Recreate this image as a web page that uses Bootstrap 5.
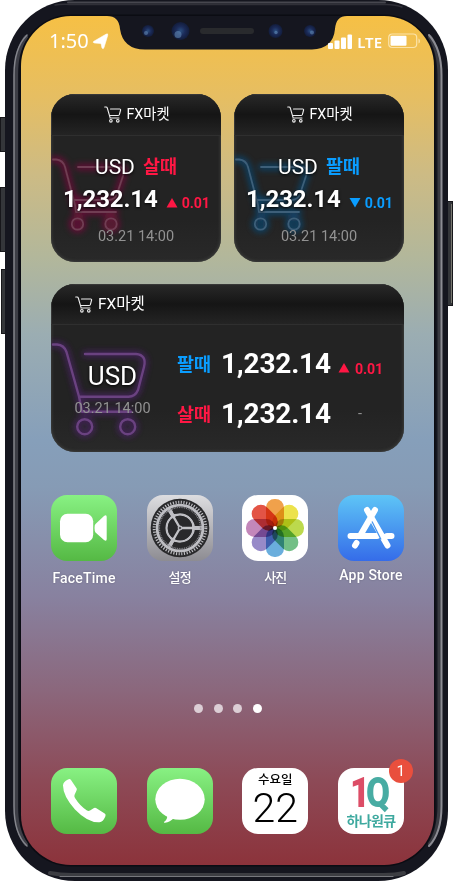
<!DOCTYPE html>
<html lang="ko">
<head>
<meta charset="utf-8">
<meta name="viewport" content="width=device-width, initial-scale=1">
<title>FX마켓 위젯</title>
<link href="https://cdn.jsdelivr.net/npm/bootstrap@5.3.0/dist/css/bootstrap.min.css" rel="stylesheet">
<style>
body{background:#fff;font-family:Roboto,"Noto Sans CJK KR",sans-serif;color:#fff;overflow:hidden}
svg{display:block;flex:none}
.phone{width:453px;height:881px;padding:16px 19px 16px 21px}
.shell{left:0;top:0;z-index:0}
.display-area{z-index:1;height:849px;border-radius:50px;padding:0 30px;overflow:hidden;
 background:linear-gradient(#f6c045 0,#e6be62 9.5%,#cdbb84 18.5%,#b2b79b 28.5%,#9badb2 37.5%,#869fba 50%,#869bb5 55.5%,#88819f 68.5%,#8b677c 79.5%,#8d4a57 90%,#8c333b 100%)}
.notch{left:84px;top:0}
.status{height:78px;margin:0 -17px 0 -2px;padding-top:13px;font-family:"Noto Sans",sans-serif}
.clock{font-size:20px;line-height:24px}
.locate{margin-left:3px}
.net{font-size:15px;line-height:26px;font-weight:600;margin:0 6px 0 4px}
.widget{border-radius:24px;background:linear-gradient(#232323 75%,#292929);overflow:hidden;height:168px;box-shadow:inset 0 0 3px 1px #3c3d3b}
.square{width:170px}
.w-head{height:42px;background:linear-gradient(#292929,#151515 50%,#1b1b1b 70%,#242424);border-bottom:1px solid #2f2f2f;font-size:14.3px;line-height:41px;box-shadow:inset 1px 1px 1px #3a3a3a;position:relative}
.square .w-head{padding-left:2px}
.cart-bg{left:0;top:0}
.square .pair{margin-top:18px;height:26px;line-height:26px}
.usd{font-size:21px}
.kind{font-size:18.5px;font-weight:700;margin-left:8px}
.amount{font-size:24px;font-weight:700;line-height:28px;letter-spacing:-.1px}
.quote{margin-top:5px;padding-left:12px}
.delta{font-size:14.2px;font-weight:700;line-height:20px;letter-spacing:-.1px}
.stamp{font-size:14.5px;line-height:18px;color:#929292}
.square .stamp{margin-top:15px}
.buy{color:#ff1744}.sell{color:#0a9dff}
.glow{text-shadow:0 1px 3px #000}
.wide{margin-top:22px}
.wide .w-head{height:41px;font-size:15.5px;line-height:41px;padding-left:24px}
.wide .w-title{padding-left:5px}
.wide .left-col{width:123px;padding-top:34px}
.wide .usd{font-size:26px;line-height:34px}
.wide .left-col .stamp{margin-top:7px}
.wide .rates{padding:22px 0 0 3px}
.wide .rate{height:50px}
.wide .kind{margin:0;width:44px;font-size:18.5px;line-height:37px}
.wide .amount{font-size:28px;line-height:34px;width:113px;letter-spacing:-.2px}
.rate .arrow{margin-top:16px}
.wide .delta{padding-left:1px}
.tile{width:66px;height:66px;border-radius:16px;overflow:hidden}
.apps{margin-top:43px}
.app{width:66px}
.app-name{font-size:14px;font-weight:500;line-height:20px;margin-top:7px;white-space:nowrap;letter-spacing:.2px;text-shadow:0 0 2px #0004}
.app-name.ko{font-size:13px;letter-spacing:-.9px}
.app-name.high{margin-top:4px}
.petals{isolation:isolate}
.petals rect{mix-blend-mode:multiply}
.pages{gap:10.6px;margin-top:116px;height:9px;padding-left:1px}
.page-dot{width:9px;height:9px;border-radius:50%;background:#dcced5}
.page-dot.on{background:#fff}
.dock{margin-top:55px}
.day{font-size:12.5px;font-weight:500;line-height:16px;padding-top:4px}
.date-num{font-size:41px;font-weight:300;line-height:42px;margin-top:-1px}
.hana{font-size:14px;font-weight:700;line-height:16px;color:#3ea99f;letter-spacing:-.6px}
.alert-dot{width:24px;height:24px;border-radius:50%;background:#e94f3d;right:-9px;top:-9px;font-size:15.5px;line-height:24px}
</style>
<script src="https://cdn.jsdelivr.net/npm/bootstrap@5.3.0/dist/js/bootstrap.bundle.min.js"></script>
</head>
<body>
<svg width="0" height="0" class="position-absolute">
 <defs>
  <linearGradient id="green" x2="0" y2="1"><stop stop-color="#88f183"/><stop offset="1" stop-color="#55b944"/></linearGradient>
  <linearGradient id="silver" x2="0" y2="1"><stop stop-color="#dddde0"/><stop offset="1" stop-color="#8d8c92"/></linearGradient>
  <linearGradient id="sky" x2="0" y2="1"><stop stop-color="#5ec5f6"/><stop offset="1" stop-color="#356ce9"/></linearGradient>
  <radialGradient id="lens"><stop stop-color="#2b4f80"/><stop offset=".5" stop-color="#1b2b59"/><stop offset="1" stop-color="#121c3a"/></radialGradient>
  <filter id="neon" x="-30%" y="-30%" width="160%" height="160%"><feGaussianBlur stdDeviation="3"/></filter>
  <symbol id="cart" viewBox="0 0 18 17"><g fill="none" stroke="#eee" stroke-width="1.100" stroke-linecap="round" stroke-linejoin="round"><path d="M.7 1H2q1 0 1.300 1L6 11.400M6.500 3h9.200q1.100 0 .9 1l-1.200 4.500q-.2 1-1.200 1H5.500M6 12h9"/><circle cx="6.900" cy="14.800" r="1.300"/><circle cx="13.800" cy="14.800" r="1.300"/></g></symbol>
  <g id="trolley" fill="none" stroke-linecap="round" stroke-linejoin="round"><path d="M2 65.500H5Q12 66 14 73L24 111L25 118H65M22 106H57Q64 106 66 100L73 79Q74 73 67 73H27"/><circle cx="26.500" cy="130" r="5.700"/><circle cx="60" cy="130" r="5.700"/></g>
  <g id="trolley-lg" fill="none" stroke-linecap="round" stroke-linejoin="round"><path d="M2 60.500H6Q13 61 15.500 68L28 112.500L31 127.700H80M28 112.700H77Q84 113 87 106L93 83Q96 71 85 70H34"/><circle cx="33.700" cy="142.700" r="7.500"/><circle cx="76.700" cy="142.700" r="7.500"/></g>
 </defs>
</svg>
<main class="phone position-relative">
 <svg class="shell position-absolute" width="453" height="881" viewBox="0 0 453 881">
  <g fill="#34363a" stroke="#17171b"><rect x=".5" y="117.500" width="7" height="34"/><rect x=".5" y="187.500" width="7" height="64"/><rect x="1.500" y="269.500" width="7" height="64"/><rect x="445.500" y="201.500" width="7" height="104"/></g>
  <path d="M451.500 204V303" stroke="#77776f"/>
  <rect x="5" width="443" height="881" rx="70" fill="#15161f"/>
  <g fill="none" stroke-linecap="round">
   <path d="M68 2.500H385" stroke="#47474f" stroke-width="2"/><path d="M55 5Q61 4 70 4.500H383Q395 4 402 7" stroke="#303038" stroke-width="1.500"/>
   <path d="M26 37Q16 50 16 75V806Q16 831 26 844" stroke="#3d3e46" stroke-width="4"/>
   <path d="M27 35Q14 48 14 75V806Q14 834 27 846" stroke="#84858c" stroke-width="1.500"/>
   <path d="M430 37Q439 50 439.500 75V806Q439 831 430 844" stroke="#393a41" stroke-width="4"/>
   <path d="M429 35Q441.500 49 441.500 75V806Q441.500 833 429 846" stroke="#8c8c93" stroke-width="2"/>
   <path d="M50 873Q60 875 72 875H383Q396 875 404 873" stroke="#3c3d42" stroke-width="4"/>
   <path d="M60 876.500H393" stroke="#77787d" stroke-width="1"/>
  </g>
  <rect x="19.500" y="14.500" width="416" height="852" rx="51.500" fill="#0b0c13"/>
 </svg>
 <div class="display-area position-relative">
  <svg class="notch position-absolute" width="245" height="34" viewBox="105 16 245 34">
   <path d="M107 16Q119 16 120 29Q123 49.500 145 49.500H312Q333 49 335 29Q336 16 347 16Z" fill="#15161f"/>
   <rect x="200" y="28" width="54" height="6" rx="3" fill="#292a2d"/>
   <circle cx="148" cy="31" r="6" fill="url(#lens)"/><circle cx="180.500" cy="31" r="9" fill="url(#lens)"/><circle cx="275.500" cy="31" r="7" fill="url(#lens)"/><circle cx="310" cy="31" r="6" fill="url(#lens)"/>
   <g fill="#6f9bc7" opacity=".5"><circle cx="146" cy="33" r="2"/><circle cx="178" cy="34.500" r="3.500"/><circle cx="276" cy="32.500" r="1.700"/><circle cx="312" cy="32.500" r="2"/></g>
  </svg>
  <header class="status d-flex align-items-start justify-content-between position-relative">
   <div class="d-flex"><span class="clock">1:50</span>
    <svg class="locate mt-1" width="17" height="18" viewBox="0 0 17 18"><path d="M1.500 8.500L14 1.200Q16.300 0 15.700 2.500L12 14.500Q11.500 16.500 10 15L9 10.500L2.500 10Q.5 9.500 1.500 8.500Z" fill="#fff" stroke="#fff" stroke-width=".6"/></svg></div>
   <div class="d-flex">
    <svg class="mt-1" width="26" height="18" viewBox="0 0 26 18"><g fill="#fff"><rect x="1" y="10" width="5" height="6" rx="1"/><rect x="7.500" y="7.500" width="5" height="8.500" rx="1"/><rect x="14" y="4.500" width="5" height="11.500" rx="1"/><rect x="20.500" y="1.500" width="4.500" height="14.500" rx="1"/></g></svg>
    <span class="net">LTE</span>
    <svg class="mt-1" width="33" height="17" viewBox="0 0 33 17"><rect x=".7" y="1" width="28" height="13.500" rx="3.500" fill="none" stroke="#fbe3a9" stroke-width="1.200"/><rect x="2.500" y="2.800" width="16" height="10" rx="1" fill="#fff"/><path d="M30.500 5.500Q32 6 32 8T30.500 10.500Z" fill="#fbe3a9"/></svg>
   </div>
  </header>

  <div class="d-flex justify-content-between">
   <section class="widget square position-relative">
    <svg class="cart-bg position-absolute" width="170" height="168"><use href="#trolley" stroke="#8a0842" stroke-width="5.500" filter="url(#neon)" opacity=".75"/><use href="#trolley" stroke="#703d53" stroke-width="1.800"/></svg>
    <div class="w-head d-flex align-items-center justify-content-center"><svg width="18" height="17"><use href="#cart"/></svg><span class="ms-1">FX마켓</span></div>
    <div class="position-relative">
     <div class="pair d-flex justify-content-center"><span class="usd glow">USD</span><span class="kind buy">살때</span></div>
     <div class="quote d-flex align-items-center"><span class="amount glow">1,232.14</span><svg class="ms-2 mt-2" width="12" height="10"><path d="M6 0L11.500 9.500H.5Z" fill="#ff1744"/></svg><span class="delta buy ms-1 mt-2">0.01</span></div>
     <div class="stamp text-center">03.21 14:00</div>
    </div>
   </section>
   <section class="widget square position-relative">
    <svg class="cart-bg position-absolute" width="170" height="168"><use href="#trolley" stroke="#075389" stroke-width="5.500" filter="url(#neon)" opacity=".75"/><use href="#trolley" stroke="#3d5f79" stroke-width="1.800"/></svg>
    <div class="w-head d-flex align-items-center justify-content-center"><svg width="18" height="17"><use href="#cart"/></svg><span class="ms-1">FX마켓</span></div>
    <div class="position-relative">
     <div class="pair d-flex justify-content-center"><span class="usd glow">USD</span><span class="kind sell">팔때</span></div>
     <div class="quote d-flex align-items-center"><span class="amount glow">1,232.14</span><svg class="ms-2 mt-2" width="12" height="10"><path d="M6 9.500L11.500 0H.5Z" fill="#0a9dff"/></svg><span class="delta sell ms-1 mt-2">0.01</span></div>
     <div class="stamp text-center">03.21 14:00</div>
    </div>
   </section>
  </div>

  <section class="widget wide position-relative">
   <svg class="cart-bg position-absolute" width="170" height="168"><use href="#trolley-lg" stroke="#552377" stroke-width="5" filter="url(#neon)" opacity=".8"/><use href="#trolley-lg" stroke="#6a4280" stroke-width="2.400"/></svg>
   <div class="w-head d-flex align-items-center"><svg width="18" height="17"><use href="#cart"/></svg><span class="w-title">FX마켓</span></div>
   <div class="d-flex position-relative">
    <div class="left-col text-center"><div class="usd glow">USD</div><div class="stamp">03.21 14:00</div></div>
    <div class="rates">
     <div class="rate d-flex"><span class="kind sell">팔때</span><span class="amount">1,232.14</span><svg class="arrow ms-1" width="12" height="10"><path d="M6 0L11.500 9.500H.5Z" fill="#ff1744"/></svg><span class="delta buy ms-1 pt-2 mt-1">0.01</span></div>
     <div class="rate d-flex"><span class="kind buy">살때</span><span class="amount">1,232.14</span><span class="stamp ms-4 pt-2">-</span></div>
    </div>
   </div>
  </section>

  <div class="apps d-flex justify-content-between">
   <div class="app d-flex flex-column align-items-center">
    <svg class="tile" viewBox="0 0 66 66"><rect width="66" height="66" fill="url(#green)"/><rect x="9" y="18.700" width="33.200" height="28.500" rx="7.500" fill="#fff"/><path d="M44.500 29L53 21Q55.700 19 55.700 22V44Q55.700 47 53 45L44.500 37.500Q43.500 36.500 43.500 33T44.500 29Z" fill="#fff"/></svg>
    <span class="app-name">FaceTime</span></div>
   <div class="app d-flex flex-column align-items-center">
    <svg class="tile" viewBox="0 0 66 66"><rect width="66" height="66" fill="url(#silver)"/><circle cx="33" cy="33" r="29.300" fill="#29292b"/>
     <g fill="none" stroke="#bebec3"><circle cx="33" cy="33" r="25.800" stroke-width="3" stroke-dasharray="1.150 1.552"/><circle cx="33" cy="33" r="22.900" stroke-width="2.800"/><circle cx="33" cy="33" r="13.600" stroke-width="2.600"/>
     <path d="M33 33H55M33 33L22 13.900M33 33L22 52.100" stroke-width="4"/></g>
     <circle cx="33" cy="33" r="20.600" fill="none" stroke="#8d8d92" stroke-width="1.600" stroke-dasharray=".9 .9"/>
     <g fill="none" stroke="#29292b" stroke-width="5" stroke-linecap="round"><path d="M28.500 16.300A17.300 17.300 0 0 1 48.800 26M48.800 40A17.300 17.300 0 0 1 28.500 49.700M20.700 21A17.300 17.300 0 0 0 20.700 45"/></g>
     <circle cx="33" cy="33" r="12.200" fill="#29292b"/><path d="M33 33H47M33 33L26 20.900M33 33L26 45.100" stroke="#c2c2c6" stroke-width="2.300"/><circle cx="33" cy="33" r="2.400" fill="#b7b7bd"/><circle cx="33" cy="33" r="1" fill="#333"/></svg>
    <span class="app-name ko">설정</span></div>
   <div class="app d-flex flex-column align-items-center">
    <svg class="tile" viewBox="0 0 66 66"><rect width="66" height="66" fill="#fff"/>
     <g transform="translate(33 33)"><g class="petals">
      <rect x="-9" y="-29" width="18" height="29" rx="8.500" fill="#f0a14b"/>
      <rect transform="rotate(45)" x="-9" y="-29" width="18" height="29" rx="8.500" fill="#ece24c"/>
      <rect transform="rotate(90)" x="-9" y="-29" width="18" height="29" rx="8.500" fill="#bcd94d"/>
      <rect transform="rotate(135)" x="-9" y="-29" width="18" height="29" rx="8.500" fill="#73bf86"/>
      <rect transform="rotate(180)" x="-9" y="-29" width="18" height="29" rx="8.500" fill="#6aaedd"/>
      <rect transform="rotate(225)" x="-9" y="-29" width="18" height="29" rx="8.500" fill="#978ac8"/>
      <rect transform="rotate(270)" x="-9" y="-29" width="18" height="29" rx="8.500" fill="#c387ba"/>
      <rect transform="rotate(315)" x="-9" y="-29" width="18" height="29" rx="8.500" fill="#e35445"/></g><circle r="2" fill="#fff"/></g></svg>
    <span class="app-name ko">사진</span></div>
   <div class="app d-flex flex-column align-items-center">
    <svg class="tile" viewBox="0 0 66 66"><rect width="66" height="66" fill="url(#sky)"/><g stroke="#fff" stroke-width="6" stroke-linecap="round"><path d="M12.500 41H39M49 41H53.500M37 15L22.500 40M18.500 48L17 50.500M29 15L49.500 50.500"/></g><path d="M34 26.500L43 44.500" stroke="#4795f0" stroke-width="1.200"/></svg>
    <span class="app-name high">App Store</span></div>
  </div>

  <div class="pages d-flex justify-content-center"><span class="page-dot"></span><span class="page-dot"></span><span class="page-dot"></span><span class="page-dot on"></span></div>

  <footer class="dock d-flex justify-content-between">
   <svg class="tile" viewBox="0 0 66 66"><rect width="66" height="66" fill="url(#green)"/><path d="M12 17.500Q12 14 17 11.500Q19 10.500 20 12L25.700 20.500Q26 21.500 25.500 22.500L23.500 27Q23 28.500 24 30Q29 38 36 42.500Q37.500 43.300 39 42.500L43 40Q44 39.500 45 40L53.700 45.500Q55.300 46.500 54.300 48.500Q52 54 48.500 54.300Q37 55 24 41.500Q12 28 12 17.500Z" fill="#fff"/></svg>
   <svg class="tile" viewBox="0 0 66 66"><rect width="66" height="66" fill="url(#green)"/><ellipse cx="33" cy="31.300" rx="24.700" ry="20.500" fill="#fff"/><path d="M20 47Q21 51 17 54Q16.500 55 18 54.700Q23 54 27 50Z" fill="#fff"/></svg>
   <div class="tile bg-white text-black text-center"><div class="day">수요일</div><div class="date-num">22</div></div>
   <div class="position-relative"><div class="tile bg-white text-center"><svg width="66" height="45" viewBox="0 0 66 45" overflow="visible" font-family="Roboto,sans-serif" font-weight="900" font-size="43"><text x="12" y="39" fill="#dc4d66" textLength="20" lengthAdjust="spacingAndGlyphs">1</text><text x="28" y="39" fill="#48aca3" textLength="24" lengthAdjust="spacingAndGlyphs">Q</text></svg><div class="hana">하나원큐</div></div>
    <span class="alert-dot position-absolute text-center">1</span></div>
  </footer>
 </div>
</main>
</body>
</html>
